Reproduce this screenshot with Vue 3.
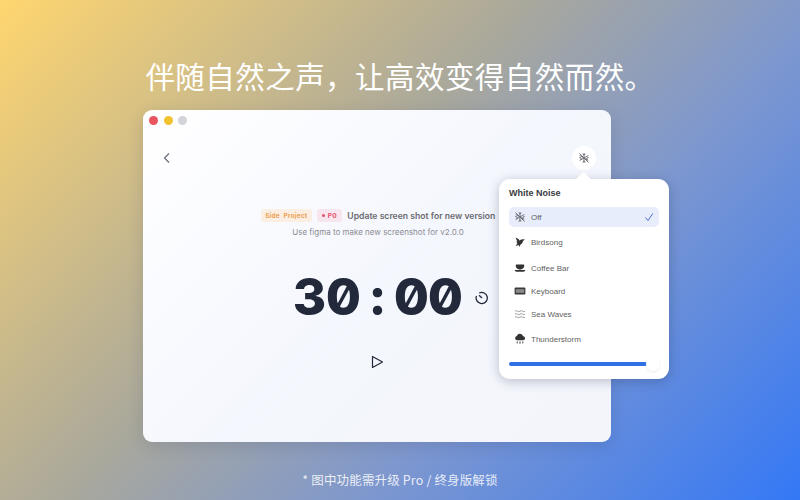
<template>
  <div class="page">
    <h1 class="headline">伴随自然之声，让高效变得自然而然。</h1>
    <div class="window">
      <div class="traffic">
        <span class="light red"></span>
        <span class="light yellow"></span>
        <span class="light grey"></span>
      </div>
      <div class="toolbar">
        <button class="back">
          <svg width="12" height="12" viewBox="0 0 12 12" fill="none" stroke="#666c78" stroke-width="1.2">
            <path d="M8 1.5 3.5 6 8 10.5" />
          </svg>
        </button>
        <button class="noise">
          <svg width="12" height="12" viewBox="0 0 12 12" v-html="offIcon"></svg>
        </button>
      </div>
      <div class="task">
        <div class="task-row">
          <span class="tag tag-side">Side&nbsp; Project</span>
          <span class="tag tag-p0"><i class="dot"></i>P0</span>
          <span class="task-title">Update screen shot for new version</span>
        </div>
        <div class="task-sub">Use figma to make new screenshot for v2.0.0</div>
      </div>
      <div class="timer">
        <div class="digits">
          <span v-for="(c, i) in digits" :key="i" class="digit">{{ c }}</span>
        </div>
        <svg class="stopwatch" width="14" height="14" viewBox="0 0 14 14" fill="none" stroke="#22293a" stroke-width="1.3">
          <path d="M4.2 2a5.6 5.6 0 1 1-2.7 3" />
          <path d="M4 4.2 7 7" />
        </svg>
      </div>
      <div class="play">
        <svg width="14" height="14" viewBox="0 0 14 14" fill="none" stroke="#22293a" stroke-width="1.2" stroke-linejoin="round">
          <path d="M2.5 1.5v11L12.5 7z" />
        </svg>
      </div>
      <div class="popover">
        <span class="arrow"></span>
        <div class="pop-title">White Noise</div>
        <ul class="sounds">
          <li v-for="s in sounds" :key="s.name" class="sound" :class="{ active: s.active }" :style="{ height: s.h + 'px' }">
            <svg class="sound-icon" width="12" height="12" viewBox="0 0 12 12" v-html="s.icon"></svg>
            <span>{{ s.name }}</span>
            <svg v-if="s.active" class="check" width="10" height="10" viewBox="0 0 10 10" fill="none" stroke="#4a6fd0" stroke-width="1">
              <path d="M1.5 5.5 4 8.5 8.8 1.5" />
            </svg>
          </li>
        </ul>
        <div class="volume">
          <div class="volume-fill"></div>
          <div class="volume-knob"></div>
        </div>
      </div>
    </div>
    <div class="footnote">* 图中功能需升级 Pro / 终身版解锁</div>
  </div>
</template>

<script setup>
const digits = '30:00'.split('')

// snowflake with a strike through it
const offIcon = '<g fill="none" stroke="#66696f" stroke-width=".9"><path d="M6 1v10M1.7 3.5l8.6 5M10.3 3.5l-8.6 5M1.5 1.5l9 9"/><path d="M4.6 1.8 6 3.2l1.4-1.4M4.6 10.2 6 8.8l1.4 1.4M1.3 5.4l1.9.6-.5 1.9M10.7 5.4l-1.9.6.5 1.9"/></g>'
const bird = '<path fill="#333" d="M1.5 1.5 4.6 3 5.4 4.4 8 3.2l3 .4-2 1.3-.6 2.2-2 1.6-.9 2.3-.8-2L1.8 10l1.6-3-1.4-1.2 1.3-.4z"/>'
const coffee = '<path fill="#333" d="M2.6 2.6h6.8c.6 0 .9.4.9 1 0 2-1.6 3.8-3.6 3.8H5.3C3.3 7.4 1.7 5.6 1.7 3.6c0-.6.3-1 .9-1z"/><path fill="#333" d="M.6 8.1h10.8c-.3 1-1.1 1.6-2 1.6H2.6c-.9 0-1.7-.6-2-1.6z"/>'
const keyboard = '<rect x=".6" y="2.6" width="10.8" height="7" rx="1" fill="#3a3a3a"/><rect x="1.8" y="4.2" width="8.4" height="3.6" fill="#8a8a8a"/>'
const waves = '<path fill="none" stroke="#777" stroke-width=".7" d="M1 3.2q1.2-1 2.5 0t2.5 0 2.5 0 2.5 0M1 6.2q1.2-1 2.5 0t2.5 0 2.5 0 2.5 0M1 9.2q1.2-1 2.5 0t2.5 0 2.5 0 2.5 0"/>'
const storm = '<path fill="#333" d="M3 7.2a2.2 2.2 0 0 1-.2-4.3 3.3 3.3 0 0 1 6.3.3A2 2 0 0 1 9 7.2z"/><path fill="none" stroke="#333" stroke-width=".9" d="M3.2 8.4v2M6 8.4v2.4M8.8 8.4v2"/>'

const sounds = [
  { name: 'Off', icon: offIcon, active: true, h: 20 },
  { name: 'Birdsong', icon: bird, h: 24 },
  { name: 'Coffee Bar', icon: coffee, h: 28 },
  { name: 'Keyboard', icon: keyboard, h: 18 },
  { name: 'Sea Waves', icon: waves, h: 28 },
  { name: 'Thunderstorm', icon: storm, h: 22 }
]
</script>

<style>
html,
body {
  margin: 0;
}
</style>

<style scoped>
.page {
  width: 800px;
  height: 500px;
  overflow: hidden;
  display: flex;
  flex-direction: column;
  align-items: center;
  background: linear-gradient(133deg, #ffd66f 0%, #a9a89c 42%, #7d97cf 66%, #3478f6 100%);
  font-family: Inter, "Liberation Sans", "Noto Sans CJK SC", sans-serif;
}

.headline {
  margin: 54px 0 0;
  height: 46px;
  line-height: 42px;
  font-size: 29.5px;
  font-weight: 400;
  letter-spacing: 0.45px;
  color: #fff;
  font-family: "Noto Sans CJK SC", sans-serif;
}

.window {
  position: relative;
  margin-top: 10px;
  margin-left: -46px;
  width: 468px;
  height: 332px;
  box-sizing: border-box;
  border-radius: 9px;
  background: linear-gradient(135deg, #ffffff 0%, #f5f7fe 50%, #f3f5fb 100%);
  box-shadow: 0 4px 16px rgba(40, 50, 80, 0.15);
}

.traffic {
  display: flex;
  gap: 5.5px;
  padding: 6px 0 0 6px;
}

.light {
  width: 9px;
  height: 9px;
  border-radius: 50%;
}

.red { background: #e8555f; }
.yellow { background: #f0c22e; }
.grey { background: #d2d4da; }

.toolbar {
  display: flex;
  justify-content: space-between;
  align-items: center;
  padding: 21px 15px 0 12px;
}

.back,
.noise {
  width: 24px;
  height: 24px;
  padding: 0;
  border: none;
  border-radius: 50%;
  display: flex;
  align-items: center;
  justify-content: center;
}

.back {
  background: transparent;
}

.noise {
  background: #fff;
}

.task {
  margin-top: 39px;
  margin-left: 118px;
  display: flex;
  flex-direction: column;
  align-items: center;
  width: 234px;
}

.task-row {
  display: flex;
  align-items: center;
  gap: 5px;
  white-space: nowrap;
}

.tag {
  display: flex;
  align-items: center;
  height: 13px;
  padding: 0 4.5px;
  border-radius: 3px;
  font-size: 6.5px;
  font-weight: 700;
  letter-spacing: 0.2px;
}

.tag-side {
  background: #fbeee2;
  color: #eda253;
}

.tag-p0 {
  padding: 0 5.5px;
  background: #f8e6ee;
  color: #e4506c;
}

.dot {
  width: 3px;
  height: 3px;
  margin-right: 2.5px;
  border-radius: 50%;
  background: #e4506c;
}

.task-title {
  font-size: 8.65px;
  font-weight: 600;
  color: #6b6b70;
}

.task-sub {
  margin-top: 5px;
  font-size: 8px;
  line-height: 10px;
  color: #8a8c92;
  white-space: nowrap;
}

.timer {
  margin-top: 25px;
  margin-left: 149.5px;
  display: flex;
  align-items: center;
  gap: 12px;
}

.digits {
  display: flex;
  font-weight: 800;
  font-size: 51px;
  line-height: 70px;
  font-variant-numeric: slashed-zero;
  color: #22293a;
}

.digit {
  width: 34px;
  display: flex;
  justify-content: center;
}

.stopwatch {
  margin-top: 2px;
}

.play {
  margin-top: 23px;
  margin-left: 227px;
  display: flex;
}

.popover {
  position: absolute;
  left: 356px;
  top: 69px;
  width: 170px;
  height: 200px;
  box-sizing: border-box;
  padding: 8px 10px 0;
  border-radius: 11px;
  background: #fff;
  box-shadow: 0 2px 12px rgba(30, 40, 70, 0.28);
}

.arrow {
  position: absolute;
  top: -5px;
  left: 79px;
  width: 11px;
  height: 11px;
  background: #fff;
  transform: rotate(45deg);
  border-radius: 2px 0 0 0;
}

.pop-title {
  position: relative;
  font-family: "Liberation Sans", sans-serif;
  font-size: 9px;
  font-weight: 700;
  color: #3a3a3e;
  line-height: 12px;
}

.sounds {
  list-style: none;
  margin: 8px 0 0;
  padding: 0;
}

.sound {
  display: flex;
  align-items: center;
  gap: 5px;
  padding: 0 5px;
  border-radius: 5px;
  font-family: "Liberation Sans", sans-serif;
  font-size: 8px;
  color: #5f5f63;
}

.sound.active {
  background: #e8edfb;
  margin-bottom: 3px;
}

.check {
  margin-left: auto;
}

.volume {
  position: relative;
  margin-top: 12px;
  height: 4px;
  border-radius: 2px;
  background: #f0f1f4;
}

.volume-fill {
  width: 138px;
  height: 4px;
  border-radius: 2px;
  background: #2f72e6;
}

.volume-knob {
  position: absolute;
  left: 137px;
  top: -5px;
  width: 14px;
  height: 14px;
  border-radius: 50%;
  background: #fff;
  box-shadow: 0 1px 3px rgba(0, 0, 0, 0.08);
}

.footnote {
  margin-top: 28px;
  font-family: "Noto Sans CJK SC", sans-serif;
  font-size: 12.5px;
  letter-spacing: 0.15px;
  color: rgba(255, 255, 255, 0.85);
}
</style>
